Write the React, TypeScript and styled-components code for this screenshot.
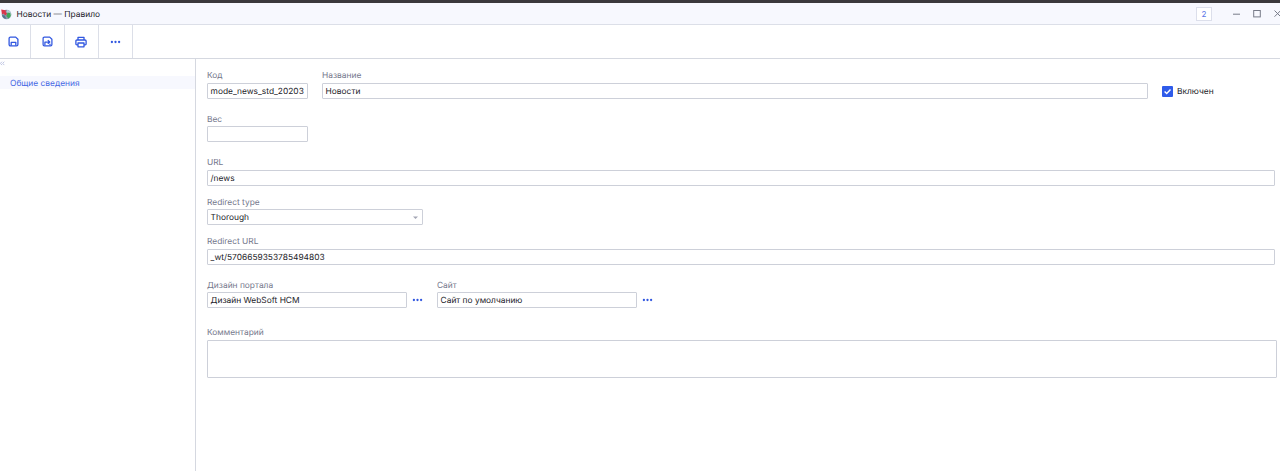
import React from 'react';
import styled, { createGlobalStyle } from 'styled-components';

const Global = createGlobalStyle`
  * { box-sizing: border-box; }
  body { margin: 0; background: #fff; overflow: hidden; }
`;

const Page = styled.div`
  height: 471px;
  display: flex;
  flex-direction: column;
  overflow: hidden;
  font-family: Inter, "Noto Sans", sans-serif;
  font-size: 8.4px;
  text-rendering: geometricPrecision;
  color: #222228;
  border-top: 3px solid #3b393c;
`;

const TitleBar = styled.header`
  flex: none;
  height: 22px;
  display: flex;
  align-items: center;
  background: #f7f8fe;
  border-bottom: 1px solid #dcdfe8;
`;

const Title = styled.h1`
  margin: 3px auto 0 3.5px;
  font-size: 8.4px;
  font-weight: 400;
  line-height: 16px;
`;

const Counter = styled.span`
  width: 16px;
  height: 14px;
  margin-right: 20px;
  display: flex;
  align-items: center;
  justify-content: center;
  border: 1px solid #dcdfeb;
  background: #fff;
  color: #5874e6;
  font-size: 8px;
`;

const WindowButtons = styled.div`
  width: 48px;
  height: 20px;
  display: flex;
  overflow: hidden;
  svg { flex: none; }
`;

const Toolbar = styled.nav`
  flex: none;
  height: 34px;
  display: flex;
  border-bottom: 1px solid #d5d8e0;
`;

const Tool = styled.button<{ $first?: boolean }>`
  width: ${p => (p.$first ? 31 : 34)}px;
  height: 33px;
  padding: 0 ${p => (p.$first ? 4 : 1)}px 0 0;
  display: flex;
  align-items: center;
  justify-content: center;
  background: none;
  border: 0;
  border-right: 1px solid #dcdfe8;
  color: #3157e0;
`;

const Body = styled.div`
  flex: 1;
  display: flex;
`;

const Sidebar = styled.aside`
  flex: none;
  width: 196px;
  border-right: 1px solid #d5d8e0;
`;

const Collapse = styled.div`
  height: 17px;
  padding-top: 2px;
  svg { display: block; }
`;

const NavItem = styled.div`
  height: 13px;
  padding: 1px 0 0 10px;
  line-height: 15px;
  background: #f7f8fe;
  color: #4567e4;
`;

const Form = styled.form`
  flex: 1;
  padding: 9px 3px 0 11px;
  display: flex;
  flex-direction: column;
`;

const Row = styled.div<{ $gap: number }>`
  display: flex;
  align-items: flex-end;
  margin-bottom: ${p => p.$gap}px;
  padding-right: 2px;
`;

const Field = styled.label<{ $width?: number }>`
  ${p => (p.$width ? `width: ${p.$width}px; flex: none;` : 'flex: 1;')}
  display: flex;
  flex-direction: column;
`;

const Caption = styled.span<{ $tight?: boolean }>`
  height: 15px;
  line-height: ${p => (p.$tight ? 18 : 16)}px;
  color: #74778c;
  white-space: nowrap;
`;

const Box = styled.span<{ $height?: number }>`
  height: ${p => p.$height ?? 16}px;
  padding: 1px 3px 0 2.6px;
  display: flex;
  align-items: center;
  justify-content: space-between;
  border: 1px solid #cdd0d9;
  border-radius: 1px;
  background: #fff;
  line-height: 14px;
  white-space: nowrap;
`;

const Spacer = styled.span<{ $width: number }>`
  flex: none;
  width: ${p => p.$width}px;
`;

const More = styled.button`
  flex: none;
  width: 30px;
  height: 16px;
  padding: 0 0 0 5px;
  border: 0;
  background: none;
  color: #3157e0;
  display: flex;
  align-items: center;
`;

const Check = styled.label`
  flex: none;
  width: 113px;
  height: 16px;
  display: flex;
  align-items: center;
  gap: 4px;
`;

const CheckText = styled.span`
  padding-top: 1px;
  line-height: 14px;
`;

const Logo = () => (
  <svg width="13" height="14" viewBox="0 0 13 14">
    <circle cx="6.5" cy="7.5" r="4.8" fill="#8a9caf" />
    <path d="M7 3a4.7 4.7 0 0 1 3.5 7.2L8 8.5 6.5 5z" fill="#b9ccd8" />
    <path d="M7.5 5.5l2.8.5.5 3-2.3 2.6-2.2-2.6z" fill="#3ea655" />
    <path d="M2 8l2.8.6 1.5 3.2A4.7 4.7 0 0 1 2 8z" fill="#54728b" />
    <path d="M1.2 2.6l5.3.8-.9 1.3 1.5 2.1-1.8 1.6-1.9-2-1.4 1z" fill="#d9364a" />
  </svg>
);

const DiskOutline = 'M2.5 1.1h5.2l2.2 2.1v5.4a1.3 1.3 0 0 1-1.3 1.3H2.4a1.3 1.3 0 0 1-1.3-1.3V2.4a1.3 1.3 0 0 1 1.3-1.3z';

const Save = () => (
  <svg width="11" height="11" viewBox="0 0 11 11" fill="none" stroke="currentColor" strokeWidth="1.3" strokeLinejoin="round">
    <path d={DiskOutline} />
    <path d="M3.2 9.5V6.3h4.6v3.2" />
  </svg>
);

const SaveExit = () => (
  <svg width="11" height="11" viewBox="0 0 11 11" fill="none" stroke="currentColor" strokeWidth="1.25" strokeLinejoin="round">
    <path d={DiskOutline} />
    <path d="M2.9 9.3V6H7.6M5.8 4.1L7.8 6 5.8 7.9M8 9.3V7.8" />
  </svg>
);

const Print = () => (
  <svg width="12" height="12" viewBox="0 0 12 12" fill="none" stroke="currentColor" strokeWidth="1.3" strokeLinejoin="round">
    <path d="M3 4V1.3h6V4M3 8.8H1.7a.8.8 0 0 1-.8-.8V5.1A1.1 1.1 0 0 1 2 4h8a1.1 1.1 0 0 1 1.1 1.1V8a.8.8 0 0 1-.8.8H9" />
    <path d="M3 7h6v3.8H3z" />
  </svg>
);

const Dots = () => (
  <svg width="11" height="4" viewBox="0 0 11 4" fill="currentColor">
    <circle cx="1.9" cy="2" r="1.15" />
    <circle cx="5.5" cy="2" r="1.15" />
    <circle cx="9.1" cy="2" r="1.15" />
  </svg>
);

const Controls = () => (
  <svg width="52" height="20" viewBox="0 0 52 20" fill="none" stroke="#777b88">
    <path d="M1 10.2h7" />
    <rect x="21.7" y="6.5" width="6.6" height="6.4" />
    <path d="M42.5 6.5l6.2 6.2M48.7 6.5l-6.2 6.2" />
  </svg>
);

interface TextFieldProps {
  label: string;
  value?: string;
  width?: number;
  height?: number;
  select?: boolean;
  tight?: boolean;
}

const TextField = ({ label, value, width, height, select, tight }: TextFieldProps) => (
  <Field $width={width}>
    <Caption $tight={tight}>{label}</Caption>
    <Box $height={height}>
      <span>{value}</span>
      {select && (
        <svg width="7" height="4" viewBox="0 0 7 4" fill="#a3a6b4">
          <path d="M1 .6h5L3.5 2.9z" />
        </svg>
      )}
    </Box>
  </Field>
);

export default function App() {
  return (
    <Page>
      <Global />
      <TitleBar>
        <Logo />
        <Title>Новости — Правило</Title>
        <Counter>2</Counter>
        <WindowButtons><Controls /></WindowButtons>
      </TitleBar>
      <Toolbar>
        <Tool type="button" $first><Save /></Tool>
        <Tool type="button"><SaveExit /></Tool>
        <Tool type="button"><Print /></Tool>
        <Tool type="button"><Dots /></Tool>
      </Toolbar>
      <Body>
        <Sidebar>
          <Collapse>
            <svg width="6" height="5" viewBox="0 0 6 5" fill="none" stroke="#aeb6da" strokeWidth=".8">
              <path d="M2 .7L.4 2.4 2 4.1M4.3 .7L2.7 2.4l1.6 1.7" />
            </svg>
          </Collapse>
          <NavItem>Общие сведения</NavItem>
        </Sidebar>
        <Form>
          <Row $gap={12}>
            <TextField label="Код" value="mode_news_std_20203" width={101} />
            <Spacer $width={14} />
            <TextField label="Название" value="Новости" />
            <Spacer $width={14} />
            <Check>
              <svg width="11" height="11" viewBox="0 0 11 11">
                <rect width="11" height="11" rx="1" fill="#2f5bea" />
                <path d="M2.6 5.5l2.1 2.1 3.8-4" fill="none" stroke="#fff" strokeWidth="1.4" />
              </svg>
              <CheckText>Включен</CheckText>
            </Check>
          </Row>
          <Row $gap={13}><TextField label="Вес" width={101} tight /></Row>
          <Row $gap={8}><TextField label="URL" value="/news" /></Row>
          <Row $gap={9}><TextField label="Redirect type" value="Thorough" width={216} select tight /></Row>
          <Row $gap={12}><TextField label="Redirect URL" value="_wt/5706659353785494803" /></Row>
          <Row $gap={17}>
            <TextField label="Дизайн портала" value="Дизайн WebSoft HCM" width={200} tight />
            <More type="button"><Dots /></More>
            <TextField label="Сайт" value="Сайт по умолчанию" width={200} tight />
            <More type="button"><Dots /></More>
          </Row>
          <TextField label="Комментарий" height={38} />
        </Form>
      </Body>
    </Page>
  );
}
